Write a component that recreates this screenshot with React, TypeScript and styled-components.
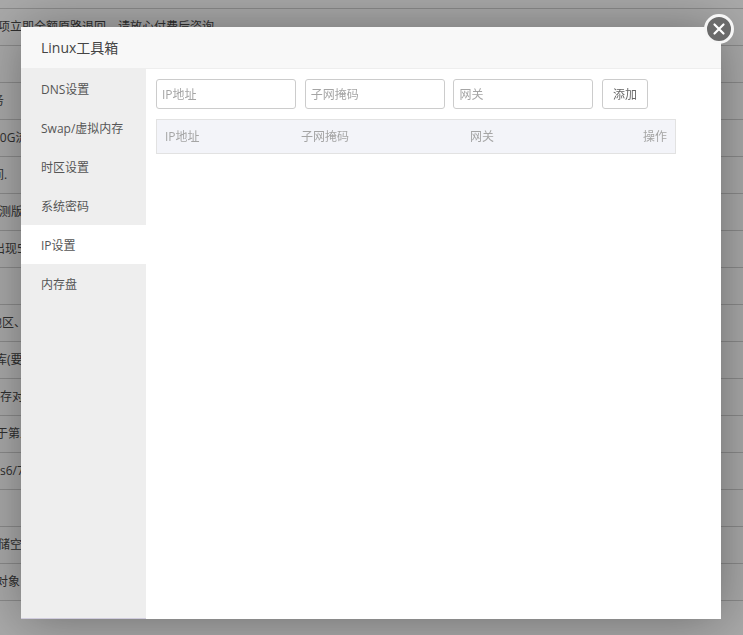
import React from "react";
import styled, { createGlobalStyle } from "styled-components";

const GlobalStyle = createGlobalStyle`
  html, body {
    margin: 0;
    height: 100%;
    overflow: hidden;
    background: #f2f2f2;
  }
  body {
    font-family: "Open Sans", "Noto Sans CJK SC", sans-serif;
  }
`;

const Page = styled.div`
  padding-top: 8px;
`;

const BackRow = styled.div<{ $shift?: number }>`
  height: 36px;
  border-top: 1px solid #c6c6c6;
  margin-left: ${(p) => p.$shift || 0}px;
  font-size: 12px;
  line-height: 36px;
  color: #444;
  white-space: nowrap;
`;

const Shade = styled.div`
  position: fixed;
  inset: 0;
  background: rgba(0, 0, 0, 0.3);
`;

const Modal = styled.div`
  position: fixed;
  left: 21px;
  top: 27px;
  width: 700px;
  height: 592px;
  background: #fff;
  box-shadow: 1px 1px 50px rgba(0, 0, 0, 0.36);
  display: flex;
  flex-direction: column;
`;

const CloseButton = styled.button`
  position: absolute;
  top: -13px;
  right: -13px;
  width: 30px;
  height: 30px;
  padding: 0;
  box-sizing: border-box;
  border: 3px solid #f6f6f6;
  border-radius: 50%;
  background: #6b6b6b;
  display: flex;
  align-items: center;
  justify-content: center;
`;

const Header = styled.div`
  height: 41px;
  flex: none;
  padding-left: 20px;
  background: #f8f8f8;
  border-bottom: 1px solid #eee;
  color: #444;
  font-size: 14px;
  line-height: 41px;
`;

const Body = styled.div`
  flex: 1;
  display: flex;
  min-height: 0;
`;

const Sidebar = styled.div`
  width: 125px;
  flex: none;
  box-sizing: border-box;
  background: #eee;
  border-bottom: 1px solid #cfcbdc;
  display: flex;
  flex-direction: column;
`;

const NavItem = styled.div<{ $active?: boolean }>`
  height: 39px;
  padding-left: 20px;
  background: ${(p) => (p.$active ? "#fff" : "transparent")};
  color: #555;
  font-size: 12px;
  line-height: 41px;
`;

const Content = styled.div`
  flex: 1;
  padding: 10px;
`;

const FormRow = styled.div`
  display: flex;
  align-items: center;
  gap: 8.7px;
`;

const Field = styled.input`
  width: 140px;
  height: 30px;
  box-sizing: border-box;
  padding: 1px 5px 0;
  border: 1px solid #ccc;
  border-radius: 3px;
  background: #fff;
  font-family: inherit;
  font-size: 12px;
  outline: none;

  &::placeholder {
    color: #a5a5a5;
    opacity: 1;
  }
`;

const AddButton = styled.button`
  width: 46px;
  height: 30px;
  box-sizing: border-box;
  padding: 0;
  border: 1px solid #ccc;
  border-radius: 3px;
  background: #fff;
  color: #666;
  font-family: inherit;
  font-size: 12px;
`;

const TableHead = styled.div`
  width: 520px;
  height: 35px;
  margin-top: 10px;
  box-sizing: border-box;
  padding: 0 8px 1px;
  display: grid;
  grid-template-columns: 136px 169px 1fr auto;
  align-items: center;
  background: #f3f4f9;
  border: 1px solid #e2e2e2;
  color: #a5a5a5;
  font-size: 12px;
`;

const backRows: { text?: string; shift?: number }[] = [
  { text: "项立即全额原路退回，请放心付费后咨询", shift: -2 },
  {},
  { text: "服务", shift: -20 },
  { text: "10G流量", shift: -7 },
  { text: "期间.", shift: -20 },
  { text: "内测版", shift: -13 },
  { text: "出现5", shift: -7 },
  {},
  { text: "地区、", shift: -10 },
  { text: "库(要求", shift: -5 },
  { text: "内存对象", shift: -12 },
  { text: "于第三", shift: -4 },
  { text: "s6/7" },
  {},
  { text: "储空间", shift: -2 },
  { text: "对象", shift: -4 },
  {},
];

const navItems = ["DNS设置", "Swap/虚拟内存", "时区设置", "系统密码", "IP设置", "内存盘"];

const App: React.FC = () => {
  return (
    <>
      <GlobalStyle />
      <Page>
        {backRows.map((row, i) => (
          <BackRow key={i} $shift={row.shift}>
            {row.text}
          </BackRow>
        ))}
      </Page>
      <Shade />
      <Modal>
        <CloseButton aria-label="close">
          <svg width="14" height="14" viewBox="0 0 14 14">
            <path d="M2.5 2.5 L11.5 11.5 M11.5 2.5 L2.5 11.5" stroke="#fff" strokeWidth="2.2" strokeLinecap="round" />
          </svg>
        </CloseButton>
        <Header>Linux工具箱</Header>
        <Body>
          <Sidebar>
            {navItems.map((item) => (
              <NavItem key={item} $active={item === "IP设置"}>
                {item}
              </NavItem>
            ))}
          </Sidebar>
          <Content>
            <FormRow>
              <Field placeholder="IP地址" />
              <Field placeholder="子网掩码" />
              <Field placeholder="网关" />
              <AddButton>添加</AddButton>
            </FormRow>
            <TableHead>
              <span>IP地址</span>
              <span>子网掩码</span>
              <span>网关</span>
              <span>操作</span>
            </TableHead>
          </Content>
        </Body>
      </Modal>
    </>
  );
};

export default App;
